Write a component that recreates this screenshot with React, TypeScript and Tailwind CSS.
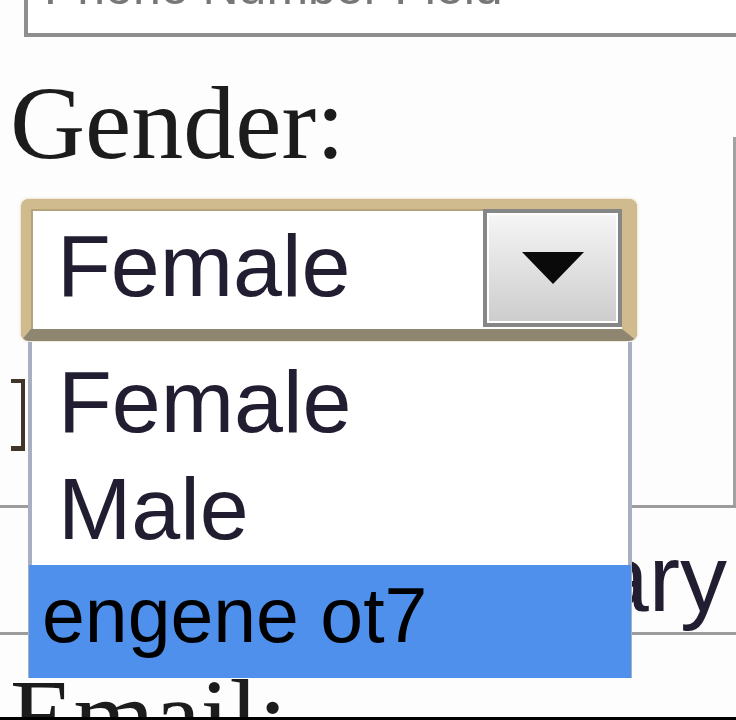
import React from 'react';

const sans = "font-['Liberation_Sans',Arial,sans-serif]";
const serif = "font-['Liberation_Serif','Times_New_Roman',serif]";

const GenderForm: React.FC = () => {
  const options = ['Female', 'Male'];

  return (
    <div className="relative w-[736px] h-[720px] overflow-hidden bg-[#fdfdfd]">
      {/* top input, cut off by the frame */}
      <div className="-mt-[50px] ml-[24px] w-[730px] h-[87px] border-[4px] border-[#8e8e8e] bg-white pt-[8px] pl-[16px]">
        <span className={`${sans} text-[50px] leading-none text-[#777]`}>Phone Number Field</span>
      </div>

      {/* row: gender + select, right cell */}
      <div className="flex mt-[34px]">
        <div className="w-[733px] h-[434px] flex flex-col">
          <div className={`${serif} text-[104px] leading-none text-[#1c1c1c] pl-[10px]`}>Gender:</div>

          <div className="mt-[24px] ml-[21px] w-[616px] h-[142px] rounded-[8px] border-t-[10px] border-l-[10px] border-r-[15px] border-b-[12px] border-[#cfbb8e] border-b-[#8f8672] flex bg-white shadow-[0_0_3px_rgba(200,170,110,0.6)]">
            <div className={`flex-1 pt-[11px] pl-[24px] ${sans} text-[88px] leading-none text-[#221d30] border-l-2 border-t-2 border-[#b5a37a]`}>
              Female
            </div>
            <div className="w-[139px] border-[4px] border-[#868686] mb-[2px]">
              <div className="h-full border-2 border-white bg-gradient-to-b from-[#f5f5f5] to-[#cdcdcd] flex items-center justify-center">
                <svg width="66" height="36" viewBox="0 0 66 36">
                  <path d="M2 2 L64 2 L33 34 Z" fill="#0a0a0a" />
                </svg>
              </div>
            </div>
          </div>

          <div className="mt-[38px] ml-[11px] w-[14px] h-[72px] border-t-[4px] border-b-[5px] border-r-[4px] border-[#3f3528]" />
        </div>
        <div className="flex-1 mt-[66px] border-l-[3px] border-[#a2a2a2]" />
      </div>

      {/* row with a label mostly hidden behind the open list */}
      <div className="h-[130px] border-y-[3px] border-[#9c9c9c] pt-[24px] pr-[9px] flex justify-end">
        <span className={`${sans} text-[94px] leading-none text-[#221d30]`}>Primary</span>
      </div>

      <div className={`mt-[29px] ${serif} text-[104px] leading-none text-[#1c1c1c] pl-[10px]`}>Email:</div>

      {/* open dropdown list */}
      <div className="absolute left-[28px] top-[342px] w-[604px] h-[336px] bg-white border-x-4 border-[#a7afc0] flex flex-col">
        <div className="pt-[16px] pl-[26px] flex flex-col gap-[19px]">
          {options.map((o) => (
            <div key={o} className={`${sans} text-[88px] leading-none text-[#221d30]`}>
              {o}
            </div>
          ))}
        </div>
        <div className={`mt-[12px] -mx-[3px] h-[113px] bg-[#4e90ec] pt-[12px] pl-[13px] ${sans} text-[77px] leading-none text-black`}>
          engene ot7
        </div>
      </div>

      <div className="absolute left-0 right-0 bottom-0 h-[3px] bg-black" />
    </div>
  );
};

export default function App() {
  return <GenderForm />;
}
